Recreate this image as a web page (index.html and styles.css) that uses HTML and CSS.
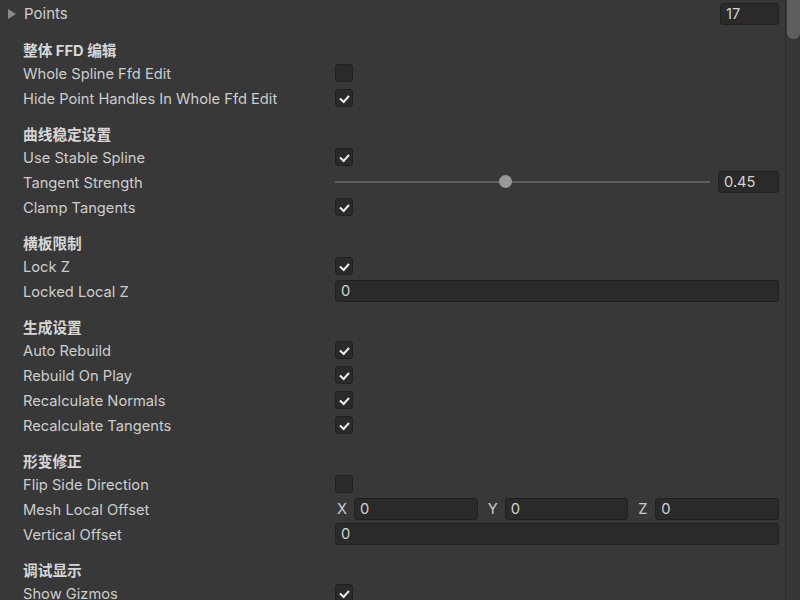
FILE: index.html
```html
<!DOCTYPE html>
<html>
<head>
    <title>Spline Inspector</title>
    <meta charset="utf-8">
    <link rel="stylesheet" href="styles.css">
</head>
<body>
<div class="inspector">
    <div class="content">
        <div class="row">
            <div class="label foldout"><span class="arrow"></span>Points</div>
            <div class="value end"><div class="field short">17</div></div>
        </div>

        <div class="header">整体 FFD 编辑</div>
        <div class="row">
            <div class="label">Whole Spline Ffd Edit</div>
            <div class="value"><span class="check"></span></div>
        </div>
        <div class="row">
            <div class="label">Hide Point Handles In Whole Ffd Edit</div>
            <div class="value"><span class="check on"></span></div>
        </div>

        <div class="header">曲线稳定设置</div>
        <div class="row">
            <div class="label">Use Stable Spline</div>
            <div class="value"><span class="check on"></span></div>
        </div>
        <div class="row">
            <div class="label">Tangent Strength</div>
            <div class="value slider-value">
                <div class="slider"><span class="thumb" style="left: 45%"></span></div>
                <div class="field slider-field">0.45</div>
            </div>
        </div>
        <div class="row">
            <div class="label">Clamp Tangents</div>
            <div class="value"><span class="check on"></span></div>
        </div>

        <div class="header">横板限制</div>
        <div class="row">
            <div class="label">Lock Z</div>
            <div class="value"><span class="check on"></span></div>
        </div>
        <div class="row">
            <div class="label">Locked Local Z</div>
            <div class="value"><div class="field wide">0</div></div>
        </div>

        <div class="header">生成设置</div>
        <div class="row">
            <div class="label">Auto Rebuild</div>
            <div class="value"><span class="check on"></span></div>
        </div>
        <div class="row">
            <div class="label">Rebuild On Play</div>
            <div class="value"><span class="check on"></span></div>
        </div>
        <div class="row">
            <div class="label">Recalculate Normals</div>
            <div class="value"><span class="check on"></span></div>
        </div>
        <div class="row">
            <div class="label">Recalculate Tangents</div>
            <div class="value"><span class="check on"></span></div>
        </div>

        <div class="header">形变修正</div>
        <div class="row">
            <div class="label">Flip Side Direction</div>
            <div class="value"><span class="check"></span></div>
        </div>
        <div class="row">
            <div class="label">Mesh Local Offset</div>
            <div class="value vector">
                <div class="axis"><span class="axis-label">X</span><div class="field wide">0</div></div>
                <div class="axis"><span class="axis-label">Y</span><div class="field wide">0</div></div>
                <div class="axis"><span class="axis-label">Z</span><div class="field wide">0</div></div>
            </div>
        </div>
        <div class="row">
            <div class="label">Vertical Offset</div>
            <div class="value"><div class="field wide">0</div></div>
        </div>

        <div class="header">调试显示</div>
        <div class="row">
            <div class="label">Show Gizmos</div>
            <div class="value"><span class="check on"></span></div>
        </div>
    </div>
    <div class="scrollbar"><div class="scroll-thumb"></div></div>
</div>
</body>
</html>
```

FILE: styles.css
```css
body {
    margin: 0;
    background-color: #383838;
    font-family: Inter, "Noto Sans CJK SC", sans-serif;
    font-size: 14.7px;
    color: #cdcdcd;
    overflow: hidden;
}
.inspector {
    display: flex;
    height: 600px;
}
.content {
    flex: 1;
    padding: 1px 6px 0 23px;
}
.row {
    display: grid;
    grid-template-columns: 312px 1fr;
    align-items: center;
    height: 25px;
}
.label {
    white-space: nowrap;
    padding-top: 2px;
}
.foldout {
    position: relative;
    padding-left: 1px;
    padding-top: 0;
    font-size: 15px;
}
.arrow {
    position: absolute;
    left: -15px;
    top: 50%;
    margin-top: -5px;
    border-left: 8px solid #8a8a8a;
    border-top: 5px solid transparent;
    border-bottom: 5px solid transparent;
}
.header {
    margin-top: 15px;
    height: 19px;
    line-height: 20px;
    font-weight: bold;
    color: #d6d6d6;
}
.value {
    display: flex;
    align-items: center;
}
.value.end {
    justify-content: flex-end;
}
.field {
    height: 22px;
    line-height: 21px;
    box-sizing: border-box;
    background-color: #2a2a2a;
    border: 1px solid #212121;
    border-radius: 3px;
    padding-left: 5px;
    color: #d2d2d2;
}
.field.short {
    width: 59px;
}
.field.wide {
    flex: 1;
}
.check {
    width: 18px;
    height: 18px;
    box-sizing: border-box;
    background-color: #2a2a2a;
    border: 1px solid #202020;
    border-radius: 3px;
    position: relative;
}
.check.on::after {
    content: "";
    position: absolute;
    left: 4px;
    top: 2px;
    width: 7px;
    height: 4px;
    border-left: 2px solid #eeeeee;
    border-bottom: 2px solid #eeeeee;
    transform: translate(0, 3px) rotate(-48deg);
    transform-origin: center;
}
.slider-value {
    gap: 8px;
}
.slider {
    flex: 1;
    height: 2px;
    background-color: #5e5e5e;
    position: relative;
}
.thumb {
    position: absolute;
    top: -6px;
    width: 13px;
    height: 13px;
    margin-left: -5px;
    border-radius: 50%;
    background-color: #999999;
}
.slider-field {
    width: 61px;
}
.vector {
    display: grid;
    grid-template-columns: 1fr 1fr 1fr;
    gap: 8px;
}
.axis {
    display: flex;
    align-items: center;
}
.axis-label {
    width: 19px;
    padding-left: 2px;
    box-sizing: border-box;
}
.scrollbar {
    width: 14px;
    border-left: 1px solid #2c2c2c;
    background-color: #363636;
}
.scroll-thumb {
    margin-left: 1px;
    height: 39px;
    background-color: #5f5f5f;
    border-radius: 0 0 6px 6px;
}
```
